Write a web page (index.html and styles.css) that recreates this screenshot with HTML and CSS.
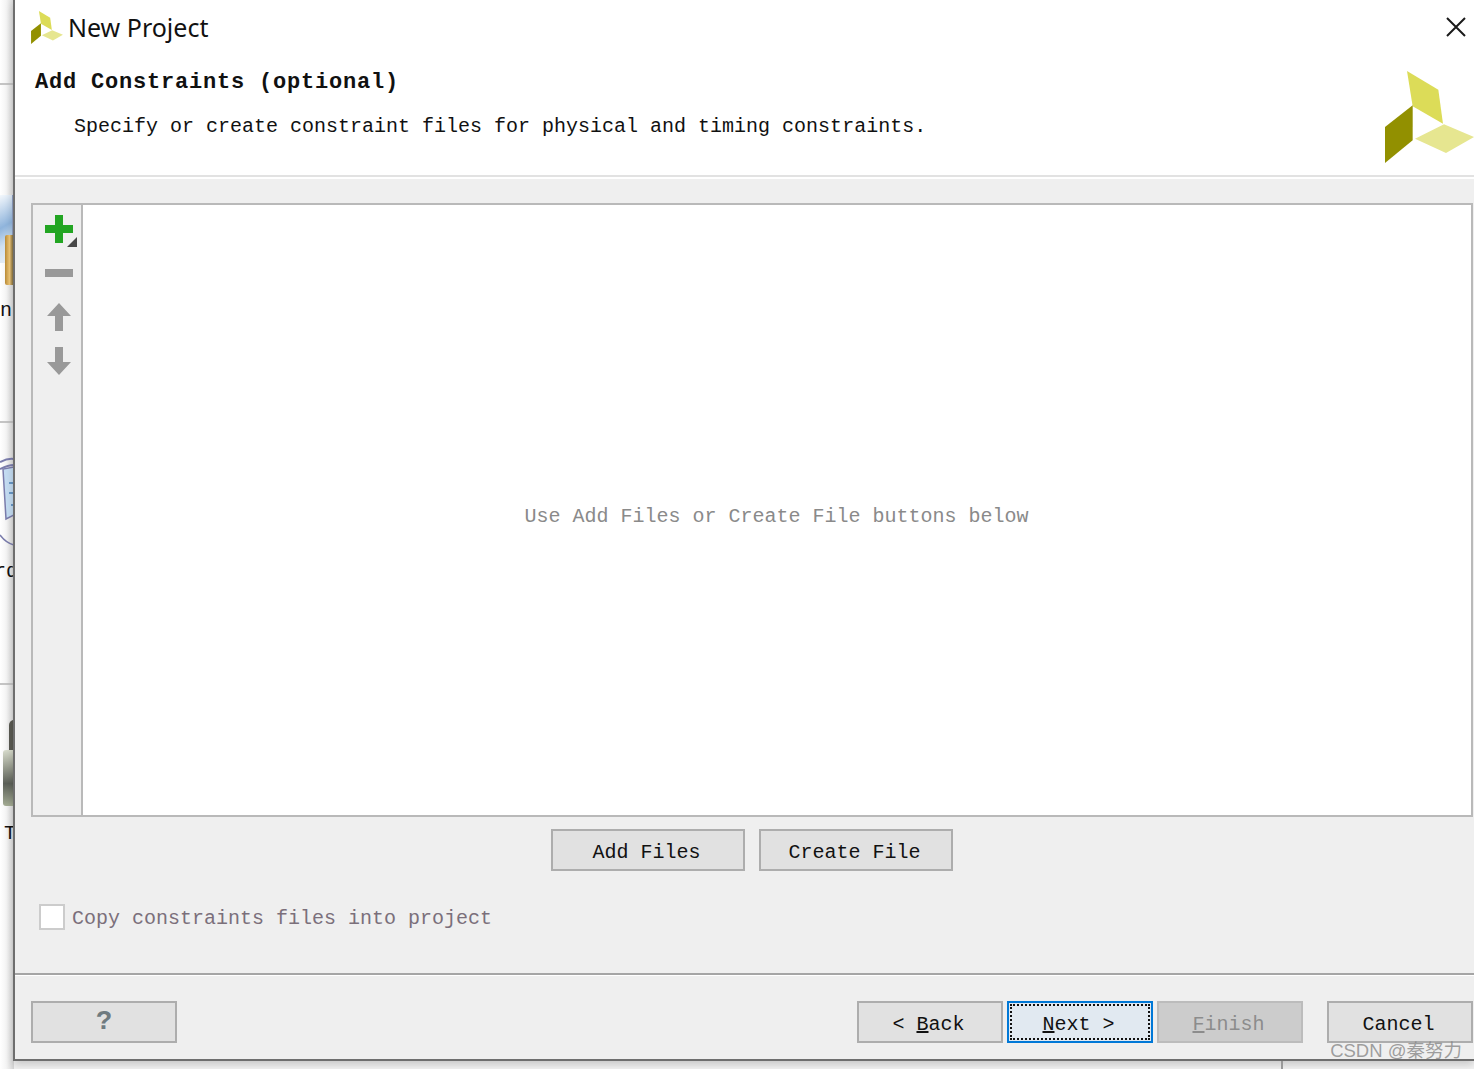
FILE: index.html
```html
<!DOCTYPE html>
<html>
<head>
  <meta charset="UTF-8">
  <title>New Project</title>
  <link rel="stylesheet" href="styles.css">
</head>
<body>
  <svg class="defs" width="0" height="0">
    <symbol id="logo" viewBox="135 212 267 276">
      <polygon points="201,212 295,268 309,370 218,318" fill="#dcdc58"/>
      <polygon points="135,380 218,315 218,420 135,488" fill="#929000"/>
      <polygon points="225,415 312,372 402,410 318,458" fill="#e6e690"/>
    </symbol>
  </svg>

  <div class="page">
    <!-- desktop behind the dialog -->
    <div class="desktop">
      <div class="desk-line line-1"></div>
      <div class="desk-line line-2"></div>
      <div class="desk-line line-3"></div>
      <div class="desk-icon icon-a"></div>
      <div class="desk-icon icon-a2"></div>
      <svg class="desk-icon icon-b" viewBox="0 0 14 90">
        <path d="M0 5 Q8 1 14 2 M0 12 Q8 8 14 8" stroke="#7a7cab" stroke-width="2" fill="none"/>
        <path d="M3 12 L6 62 L14 58 V10 Z" fill="#c4dcf2" stroke="#7a7cab" stroke-width="1.5"/>
        <path d="M9 26h5M9 36h5M11 48h3" stroke="#4a80b8" stroke-width="1.5"/>
        <path d="M0 78 Q6 86 14 88" stroke="#7a7cab" stroke-width="1.5" fill="none"/>
      </svg>
      <div class="desk-icon icon-c-top"></div>
      <div class="desk-icon icon-c"></div>
      <span class="desk-text text-a">n</span>
      <span class="desk-text text-b">rd</span>
      <span class="desk-text text-c">T</span>
    </div>

    <div class="dialog">
      <div class="header">
        <div class="header-text">
          <div class="window-title">
            <svg class="title-logo"><use href="#logo"/></svg>
            <span>New Project</span>
          </div>
          <h1 class="step-title">Add Constraints (optional)</h1>
          <p class="step-desc">Specify or create constraint files for physical and timing constraints.</p>
        </div>
        <svg class="big-logo"><use href="#logo"/></svg>
        <svg class="close" viewBox="0 0 20 20">
          <path d="M1 1 L19 19 M19 1 L1 19" stroke="#1a1a1a" stroke-width="2" fill="none"/>
        </svg>
      </div>

      <div class="content">
        <div class="files-panel">
          <div class="toolbar">
            <div class="tool">
              <svg viewBox="0 0 36 36" width="36" height="36">
                <path d="M14 4h8v10h10v8H22v10h-8V22H4v-8h10z" fill="#22a522"/>
                <polygon points="36,26 36,36 26,36" fill="#484848"/>
              </svg>
            </div>
            <div class="tool">
              <svg viewBox="0 0 36 36" width="36" height="36"><rect x="4" y="14" width="28" height="8" fill="#999"/></svg>
            </div>
            <div class="tool">
              <svg viewBox="0 0 36 36" width="36" height="36"><path d="M18 4 L30 17 H22 V32 H14 V17 H6 Z" fill="#999"/></svg>
            </div>
            <div class="tool">
              <svg viewBox="0 0 36 36" width="36" height="36"><path d="M18 32 L30 19 H22 V4 H14 V19 H6 Z" fill="#999"/></svg>
            </div>
          </div>
          <div class="files-empty">Use Add Files or Create File buttons below</div>
        </div>

        <div class="panel-buttons">
          <button class="btn btn-wide">Add Files</button>
          <button class="btn btn-wide">Create File</button>
        </div>

        <label class="copy-option">
          <span class="checkbox"></span>
          <span class="copy-label">Copy constraints files into project</span>
        </label>
      </div>

      <div class="footer">
        <button class="btn btn-help">?</button>
        <div class="nav-buttons">
          <button class="btn">&lt; <u>B</u>ack</button>
          <button class="btn btn-next"><span class="focus-ring"><span><u>N</u>ext &gt;</span></span></button>
          <button class="btn btn-disabled"><u>F</u>inish</button>
          <button class="btn btn-cancel">Cancel</button>
        </div>
      </div>
    </div>

    <div class="below">
      <div class="below-line"></div>
    </div>
    <div class="watermark">CSDN @秦努力</div>
  </div>
</body>
</html>
```

FILE: styles.css
```css
* {
  box-sizing: border-box;
}

html,
body {
  margin: 0;
  padding: 0;
  overflow: hidden;
}

.defs {
  position: absolute;
}

.page {
  position: relative;
  width: 1474px;
  height: 1069px;
  overflow: hidden;
  background-color: #f4f4f4;
  font-family: "Liberation Mono", monospace;
  font-size: 20px;
  color: #111;
}

/* desktop strip on the left */
.desktop {
  position: absolute;
  left: 0;
  top: 0;
  width: 14px;
  height: 1069px;
  overflow: hidden;
  background: linear-gradient(to right, #fff 0, #f4f4f4 45%, #d6d6d6 100%);
}

.desk-line {
  position: absolute;
  left: 0;
  width: 14px;
  height: 2px;
  background-color: #c4c4c4;
}

.line-1 { top: 83px; }
.line-2 { top: 421px; }
.line-3 { top: 683px; }

.desk-icon {
  position: absolute;
}

.icon-a {
  left: 0;
  top: 195px;
  width: 13px;
  height: 68px;
  background: linear-gradient(150deg, #f4f8fc 0, #8fb4dc 45%, #cfe0f0 70%, #e8eef5 100%);
  border-right: 1px solid #8f9fc0;
}

.icon-a2 {
  left: 5px;
  top: 235px;
  width: 9px;
  height: 50px;
  background: linear-gradient(to right, #b98a35, #f0c878 50%, #6b5a30);
  border-radius: 2px 0 0 2px;
}

.icon-b {
  left: 0;
  top: 457px;
  width: 14px;
  height: 90px;
}

.icon-c-top {
  left: 9px;
  top: 720px;
  width: 5px;
  height: 32px;
  background: #5a5a52;
  border-radius: 5px 0 0 0;
}

.icon-c {
  left: 3px;
  top: 750px;
  width: 11px;
  height: 56px;
  background: linear-gradient(to bottom, #d8dccc 0, #9a9e90 30%, #5c6058 60%, #a4ac94 100%);
  border-radius: 3px 0 0 3px;
}

.desk-text {
  position: absolute;
  font-family: "Liberation Mono", monospace;
  font-size: 20px;
  color: #111;
}

.text-a { left: 0; top: 299px; }
.text-b { left: -6px; top: 560px; }
.text-c { left: 4px; top: 822px; }

/* dialog */
.dialog {
  position: absolute;
  left: 13px;
  top: 0;
  width: 1461px;
  height: 1061px;
  display: flex;
  flex-direction: column;
  background-color: #efefef;
  border-left: 2px solid #6e6e6e;
  border-bottom: 2px solid #6e6e6e;
  box-shadow: 0 4px 8px rgba(0, 0, 0, 0.18);
}

.header {
  position: relative;
  height: 179px;
  display: flex;
  justify-content: space-between;
  background-color: #fff;
  border-bottom: 2px solid #fff;
  box-shadow: inset 0 -2px 0 #e2e2e2;
}

.header-text {
  padding-left: 16px;
}

.window-title {
  height: 54px;
  display: flex;
  align-items: center;
  gap: 5px;
  font-family: "Noto Sans", sans-serif;
  font-size: 25px;
  color: #111;
}

.title-logo {
  width: 32px;
  height: 33px;
}

.step-title {
  margin: 14px 0 0 4px;
  font-size: 22px;
  line-height: 30px;
  letter-spacing: 0.8px;
  font-weight: bold;
}

.step-desc {
  margin: 14px 0 0 43px;
  font-size: 20px;
  line-height: 30px;
}

.big-logo {
  width: 89px;
  height: 92px;
  margin-top: 71px;
}

.close {
  position: absolute;
  right: 8px;
  top: 17px;
  width: 20px;
  height: 20px;
}

.content {
  flex: 1;
  padding: 24px 1px 0 16px;
}

.files-panel {
  height: 614px;
  display: flex;
  border: 2px solid #b9b9b9;
  background-color: #fff;
}

.toolbar {
  width: 50px;
  padding: 2px 0 0 4px;
  background-color: #efefef;
  border-right: 2px solid #b9b9b9;
}

.tool {
  height: 44px;
  display: flex;
  align-items: center;
  justify-content: center;
}

.files-empty {
  flex: 1;
  display: flex;
  align-items: center;
  justify-content: center;
  color: #8a8a8a;
  padding: 12px 1px 0 0;
}

.panel-buttons {
  display: flex;
  justify-content: center;
  gap: 14px;
  margin-top: 12px;
}

.btn {
  width: 146px;
  height: 42px;
  padding: 4px 3px 0 0;
  font-family: "Liberation Mono", monospace;
  font-size: 20px;
  color: #111;
  background-color: #e1e1e1;
  border: 2px solid #adadad;
}

.btn-wide {
  width: 194px;
}

.copy-option {
  display: flex;
  align-items: center;
  gap: 7px;
  margin: 32px 0 0 8px;
  color: #7b6f7b;
}

.copy-label {
  margin-top: 4px;
}

.checkbox {
  width: 26px;
  height: 26px;
  background-color: #fff;
  border: 2px solid #ccc;
}

.footer {
  height: 86px;
  display: flex;
  justify-content: space-between;
  align-items: flex-start;
  padding: 26px 1px 0 16px;
  border-top: 2px solid #a5a5a5;
  box-shadow: inset 0 1px 0 #fff;
}

.btn-help {
  padding: 0;
  font-size: 27px;
  font-weight: bold;
  color: #6f7b80;
}

.nav-buttons {
  display: flex;
  gap: 4px;
}

.btn-next {
  padding: 1px;
  background-color: #e1e9f1;
  border-color: #0078d7;
}

.focus-ring {
  display: flex;
  align-items: center;
  justify-content: center;
  height: 100%;
  padding: 4px 3px 0 0;
  border: 2px dotted #111;
}

.btn-disabled {
  color: #8c8c8c;
  background-color: #cccccc;
  border-color: #bcbcbc;
}

.btn-cancel {
  margin-left: 20px;
}

/* what shows under the dialog */
.below {
  position: absolute;
  left: 15px;
  top: 1061px;
  width: 1459px;
  height: 8px;
}

.below-line {
  position: absolute;
  left: 1266px;
  top: 0;
  width: 2px;
  height: 8px;
  background-color: #999;
}

.watermark {
  position: absolute;
  right: 12px;
  top: 1036px;
  font-family: "Liberation Sans", "Noto Sans CJK SC", sans-serif;
  font-size: 18.5px;
  color: rgba(130, 130, 130, 0.75);
}
```
